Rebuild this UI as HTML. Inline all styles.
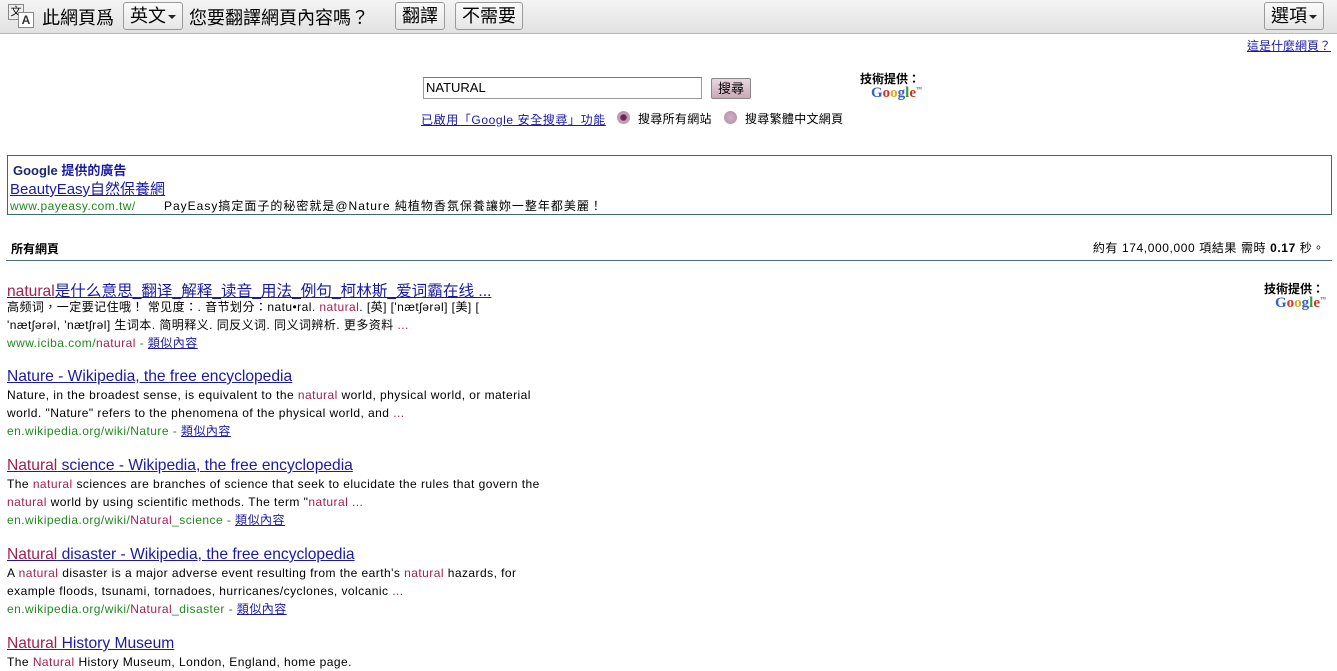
<!DOCTYPE html>
<html><head><meta charset="utf-8">
<style>
*{margin:0;padding:0;box-sizing:border-box}
body{width:1337px;height:668px;overflow:hidden;background:#fff;font-family:"Liberation Sans","Noto Sans CJK TC",sans-serif;color:#000;position:relative}
.a{position:absolute;white-space:nowrap}
#bar{position:absolute;left:0;top:0;width:1337px;height:34px;background:linear-gradient(#f4f4f4,#e2e2e2);border-bottom:1px solid #b8b8b8}
.btn{position:absolute;top:2px;height:28px;border:1px solid #9a9a9a;border-radius:3px;background:linear-gradient(#fafafa,#e6e6e6);font-size:18px;line-height:26px;padding:0 6px}
.car{display:inline-block;width:0;height:0;border-left:4px solid transparent;border-right:4px solid transparent;border-top:4px solid #222;vertical-align:middle;margin-left:2px}
a,.lk{color:#1a1aa6;text-decoration:underline}
.t{font-size:15.6px;color:#1a1aa6;text-decoration:underline}
.h{color:#a3204e}
.s{font-size:12px;line-height:18px;letter-spacing:0.45px}
.u{color:#228822}
</style></head><body>
<div id="bar">
  <div class="a" style="left:8px;top:4px;width:26px;height:24px">
    <div style="position:absolute;left:0;top:0;width:16px;height:16px;border:1px solid #888;background:#eee;font-size:11px;line-height:14px;text-align:center">文</div>
    <div style="position:absolute;left:10px;top:8px;width:16px;height:16px;border:1px solid #888;background:#fff;font-size:12px;font-weight:bold;line-height:14px;text-align:center;color:#333">A</div>
  </div>
  <div class="a" style="left:42px;top:4px;font-size:18px">此網頁爲</div>
  <div class="btn" style="left:123px">英文<span class="car"></span></div>
  <div class="a" style="left:189px;top:4px;font-size:18px">您要翻譯網頁內容嗎？</div>
  <div class="btn" style="left:395px">翻譯</div>
  <div class="btn" style="left:455px">不需要</div>
  <div class="btn" style="left:1264px">選項<span class="car"></span></div>
</div>
<div class="a lk" style="left:1247px;top:37px;font-size:12px">這是什麼網頁？</div>

<div class="a" style="left:423px;top:77px;width:279px;height:22px;border:1px solid #999;border-top-color:#777;font-size:13px;line-height:20px;padding-left:2px">NATURAL</div>
<div class="a" style="left:711px;top:78px;width:40px;height:21px;border:1px solid #888;border-radius:2px;background:linear-gradient(#e9d6e0,#c9a9b9);font-size:13px;line-height:19px;text-align:center">搜尋</div>
<div class="a" style="left:860px;top:70px;font-size:12px;font-weight:bold">技術提供：</div>
<div class="a" style="left:871px;top:85px;font-size:15px;font-weight:bold;font-family:'Liberation Serif',serif"><span style="color:#3b5fc9">G</span><span style="color:#c3372a">o</span><span style="color:#e2a81a">o</span><span style="color:#3b5fc9">g</span><span style="color:#3a9a3a">l</span><span style="color:#c3372a">e</span><sup style="font-size:6px;color:#666">™</sup></div>
<div class="a lk" style="left:421px;top:111px;font-size:12px;letter-spacing:0.6px">已啟用「Google 安全搜尋」功能</div>
<div class="a" style="left:617px;top:111px;width:13px;height:13px;border-radius:50%;background:radial-gradient(#6a2a4a 30%,#c9a0b8 40%,#b88aa4)"></div>
<div class="a" style="left:638px;top:110px;font-size:12px;letter-spacing:0.3px">搜尋所有網站</div>
<div class="a" style="left:724px;top:111px;width:13px;height:13px;border-radius:50%;background:radial-gradient(#d0b0c4,#b08aa2)"></div>
<div class="a" style="left:745px;top:110px;font-size:12px;letter-spacing:0.3px">搜尋繁體中文網頁</div>

<div class="a" style="left:7px;top:155px;width:1325px;height:60px;border:1px solid #3a6a6a"></div>
<div class="a" style="left:13px;top:160px;font-size:13px;font-weight:bold;color:#1a1aa6"><span style="color:#1a2a6a">Google</span> 提供的廣告</div>
<div class="a t" style="left:10px;top:178px;font-size:15px">BeautyEasy自然保養網</div>
<div class="a s u" style="left:10px;top:197px">www.payeasy.com.tw/</div>
<div class="a s" style="left:164px;top:197px;letter-spacing:1px">PayEasy搞定面子的秘密就是@Nature 純植物香氛保養讓妳一整年都美麗！</div>

<div class="a" style="left:11px;top:240px;font-size:12px;font-weight:bold">所有網頁</div>
<div class="a s" style="right:12px;top:239px;letter-spacing:0.6px">約有 174,000,000 項結果 需時 <b>0.17</b> 秒。</div>
<div class="a" style="left:6px;top:260px;width:1326px;height:1px;background:#4a6a7a"></div>

<div class="a" style="left:1264px;top:280px;font-size:12px;font-weight:bold">技術提供：</div>
<div class="a" style="left:1275px;top:295px;font-size:15px;font-weight:bold;font-family:'Liberation Serif',serif"><span style="color:#3b5fc9">G</span><span style="color:#c3372a">o</span><span style="color:#e2a81a">o</span><span style="color:#3b5fc9">g</span><span style="color:#3a9a3a">l</span><span style="color:#c3372a">e</span><sup style="font-size:6px;color:#666">™</sup></div>

<div class="a t" style="left:7px;top:279px"><span class="h">natural</span>是什么意思_翻译_解释_读音_用法_例句_柯林斯_爱词霸在线 ...</div>
<div class="a s" style="left:7px;top:298px">高频词，一定要记住哦！ 常见度：. 音节划分：natu•ral. <span class="h">natural</span>. [英] ['nætʃərəl] [美] [<br>'nætʃərəl, 'nætʃrəl] 生词本. 简明释义. 同反义词. 同义词辨析. 更多资料 <span class="h">...</span><br><span class="u">www.iciba.com/<span class="h">natural</span> - </span><span class="lk">類似內容</span></div>

<div class="a t" style="left:7px;top:368px">Nature - Wikipedia, the free encyclopedia</div>
<div class="a s" style="left:7px;top:386px">Nature, in the broadest sense, is equivalent to the <span class="h">natural</span> world, physical world, or material<br>world. "Nature" refers to the phenomena of the physical world, and <span class="h">...</span><br><span class="u">en.wikipedia.org/wiki/Nature - </span><span class="lk">類似內容</span></div>

<div class="a t" style="left:7px;top:457px"><span class="h">Natural</span> science - Wikipedia, the free encyclopedia</div>
<div class="a s" style="left:7px;top:475px">The <span class="h">natural</span> sciences are branches of science that seek to elucidate the rules that govern the<br><span class="h">natural</span> world by using scientific methods. The term "<span class="h">natural ...</span><br><span class="u">en.wikipedia.org/wiki/<span class="h">Natural</span>_science - </span><span class="lk">類似內容</span></div>

<div class="a t" style="left:7px;top:546px"><span class="h">Natural</span> disaster - Wikipedia, the free encyclopedia</div>
<div class="a s" style="left:7px;top:564px">A <span class="h">natural</span> disaster is a major adverse event resulting from the earth's <span class="h">natural</span> hazards, for<br>example floods, tsunami, tornadoes, hurricanes/cyclones, volcanic <span class="h">...</span><br><span class="u">en.wikipedia.org/wiki/<span class="h">Natural</span>_disaster - </span><span class="lk">類似內容</span></div>

<div class="a t" style="left:7px;top:635px"><span class="h">Natural</span> History Museum</div>
<div class="a s" style="left:7px;top:653px">The <span class="h">Natural</span> History Museum, London, England, home page.</div>
</body></html>
